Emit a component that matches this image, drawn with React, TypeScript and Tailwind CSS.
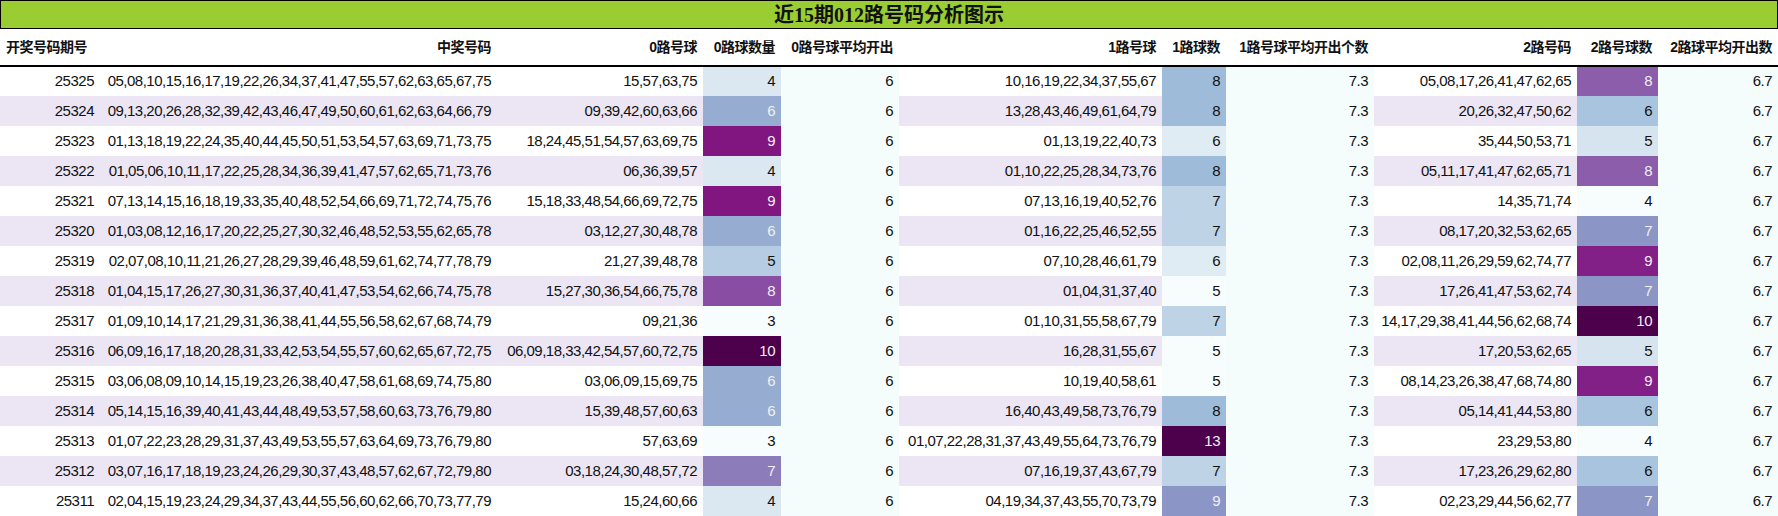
import React from "react";

const rows: [string, string, string, number, string, number, string, number][] = [
  ["25325","05,08,10,15,16,17,19,22,26,34,37,41,47,55,57,62,63,65,67,75","15,57,63,75",4,"10,16,19,22,34,37,55,67",8,"05,08,17,26,41,47,62,65",8],
  ["25324","09,13,20,26,28,32,39,42,43,46,47,49,50,60,61,62,63,64,66,79","09,39,42,60,63,66",6,"13,28,43,46,49,61,64,79",8,"20,26,32,47,50,62",6],
  ["25323","01,13,18,19,22,24,35,40,44,45,50,51,53,54,57,63,69,71,73,75","18,24,45,51,54,57,63,69,75",9,"01,13,19,22,40,73",6,"35,44,50,53,71",5],
  ["25322","01,05,06,10,11,17,22,25,28,34,36,39,41,47,57,62,65,71,73,76","06,36,39,57",4,"01,10,22,25,28,34,73,76",8,"05,11,17,41,47,62,65,71",8],
  ["25321","07,13,14,15,16,18,19,33,35,40,48,52,54,66,69,71,72,74,75,76","15,18,33,48,54,66,69,72,75",9,"07,13,16,19,40,52,76",7,"14,35,71,74",4],
  ["25320","01,03,08,12,16,17,20,22,25,27,30,32,46,48,52,53,55,62,65,78","03,12,27,30,48,78",6,"01,16,22,25,46,52,55",7,"08,17,20,32,53,62,65",7],
  ["25319","02,07,08,10,11,21,26,27,28,29,39,46,48,59,61,62,74,77,78,79","21,27,39,48,78",5,"07,10,28,46,61,79",6,"02,08,11,26,29,59,62,74,77",9],
  ["25318","01,04,15,17,26,27,30,31,36,37,40,41,47,53,54,62,66,74,75,78","15,27,30,36,54,66,75,78",8,"01,04,31,37,40",5,"17,26,41,47,53,62,74",7],
  ["25317","01,09,10,14,17,21,29,31,36,38,41,44,55,56,58,62,67,68,74,79","09,21,36",3,"01,10,31,55,58,67,79",7,"14,17,29,38,41,44,56,62,68,74",10],
  ["25316","06,09,16,17,18,20,28,31,33,42,53,54,55,57,60,62,65,67,72,75","06,09,18,33,42,54,57,60,72,75",10,"16,28,31,55,67",5,"17,20,53,62,65",5],
  ["25315","03,06,08,09,10,14,15,19,23,26,38,40,47,58,61,68,69,74,75,80","03,06,09,15,69,75",6,"10,19,40,58,61",5,"08,14,23,26,38,47,68,74,80",9],
  ["25314","05,14,15,16,39,40,41,43,44,48,49,53,57,58,60,63,73,76,79,80","15,39,48,57,60,63",6,"16,40,43,49,58,73,76,79",8,"05,14,41,44,53,80",6],
  ["25313","01,07,22,23,28,29,31,37,43,49,53,55,57,63,64,69,73,76,79,80","57,63,69",3,"01,07,22,28,31,37,43,49,55,64,73,76,79",13,"23,29,53,80",4],
  ["25312","03,07,16,17,18,19,23,24,26,29,30,37,43,48,57,62,67,72,79,80","03,18,24,30,48,57,72",7,"07,16,19,37,43,67,79",7,"17,23,26,29,62,80",6],
  ["25311","02,04,15,19,23,24,29,34,37,43,44,55,56,60,62,66,70,73,77,79","15,24,60,66",4,"04,19,34,37,43,55,70,73,79",9,"02,23,29,44,56,62,77",7],
];

const stops = ["#f7fcfd","#e0ecf4","#bfd3e6","#9ebcda","#8c96c6","#8c6bb1","#88419d","#810f7c","#4d004b"];
const hex = (h: string) => [1, 3, 5].map((i) => parseInt(h.slice(i, i + 2), 16));
function scale(v: number, min: number, max: number) {
  const t = (v - min) / (max - min);
  const p = t * 8;
  const i = Math.min(7, Math.floor(p));
  const f = p - i;
  const a = hex(stops[i]), b = hex(stops[i + 1]);
  const c = a.map((x, k) => Math.round(x + (b[k] - x) * f));
  return { bg: `rgb(${c.join(",")})`, fg: t >= 0.4 ? "#f0f0f0" : "#111" };
}
const rng = (k: 3 | 5 | 7) => {
  const vs = rows.map((r) => r[k] as number);
  return [Math.min(...vs), Math.max(...vs)];
};
const r0 = rng(3), r1 = rng(5), r2 = rng(7);

const widths = [100, 397, 206, 78, 118, 263, 64, 148, 203, 81, 120];
const heads = ["开奖号码期号","中奖号码","0路号球","0路球数量","0路号球平均开出","1路号球","1路球数","1路号球平均开出个数","2路号码","2路号球数","2路球平均开出数"];

export default function App() {
  return (
    <div className="w-[1778px] bg-white text-[15px] tracking-[-0.5px] text-[#111]" style={{ fontFamily: '"Liberation Sans","Noto Sans CJK SC",sans-serif' }}>
      <div className="h-[29px] bg-[#9acd32] border border-black flex items-center justify-center font-bold text-[20px] tracking-normal" style={{ fontFamily: '"Liberation Serif","Noto Sans CJK SC",serif' }}>
        近15期012路号码分析图示
      </div>
      <table className="table-fixed border-collapse w-[1778px]">
        <colgroup>
          {widths.map((w, i) => <col key={i} style={{ width: w }} />)}
        </colgroup>
        <thead>
          <tr className="h-[37px] border-b-2 border-black">
            {heads.map((h, i) => (
              <th key={i} className={`font-bold text-[14px] tracking-[-0.5px] px-[6px] whitespace-nowrap ${i === 0 ? "text-left" : "text-right"}`}>{h}</th>
            ))}
          </tr>
        </thead>
        <tbody>
          {rows.map((r, i) => {
            const stripe = i % 2 === 1 ? "bg-[#ece6f4]" : "bg-white";
            const c0 = scale(r[3], r0[0], r0[1]);
            const c1 = scale(r[5], r1[0], r1[1]);
            const c2 = scale(r[7], r2[0], r2[1]);
            const td = "px-[6px] text-right whitespace-nowrap";
            return (
              <tr key={r[0]} className="h-[30px]">
                <td className={`${td} ${stripe}`}>{r[0]}</td>
                <td className={`${td} ${stripe}`}>{r[1]}</td>
                <td className={`${td} ${stripe}`}>{r[2]}</td>
                <td className={td} style={{ background: c0.bg, color: c0.fg }}>{r[3]}</td>
                <td className={`${td} bg-[#f5fcfc]`}>6</td>
                <td className={`${td} ${stripe}`}>{r[4]}</td>
                <td className={td} style={{ background: c1.bg, color: c1.fg }}>{r[5]}</td>
                <td className={`${td} bg-[#f5fcfc]`}>7.3</td>
                <td className={`${td} ${stripe}`}>{r[6]}</td>
                <td className={td} style={{ background: c2.bg, color: c2.fg }}>{r[7]}</td>
                <td className={`${td} bg-[#f5fcfc]`}>6.7</td>
              </tr>
            );
          })}
        </tbody>
      </table>
    </div>
  );
}
